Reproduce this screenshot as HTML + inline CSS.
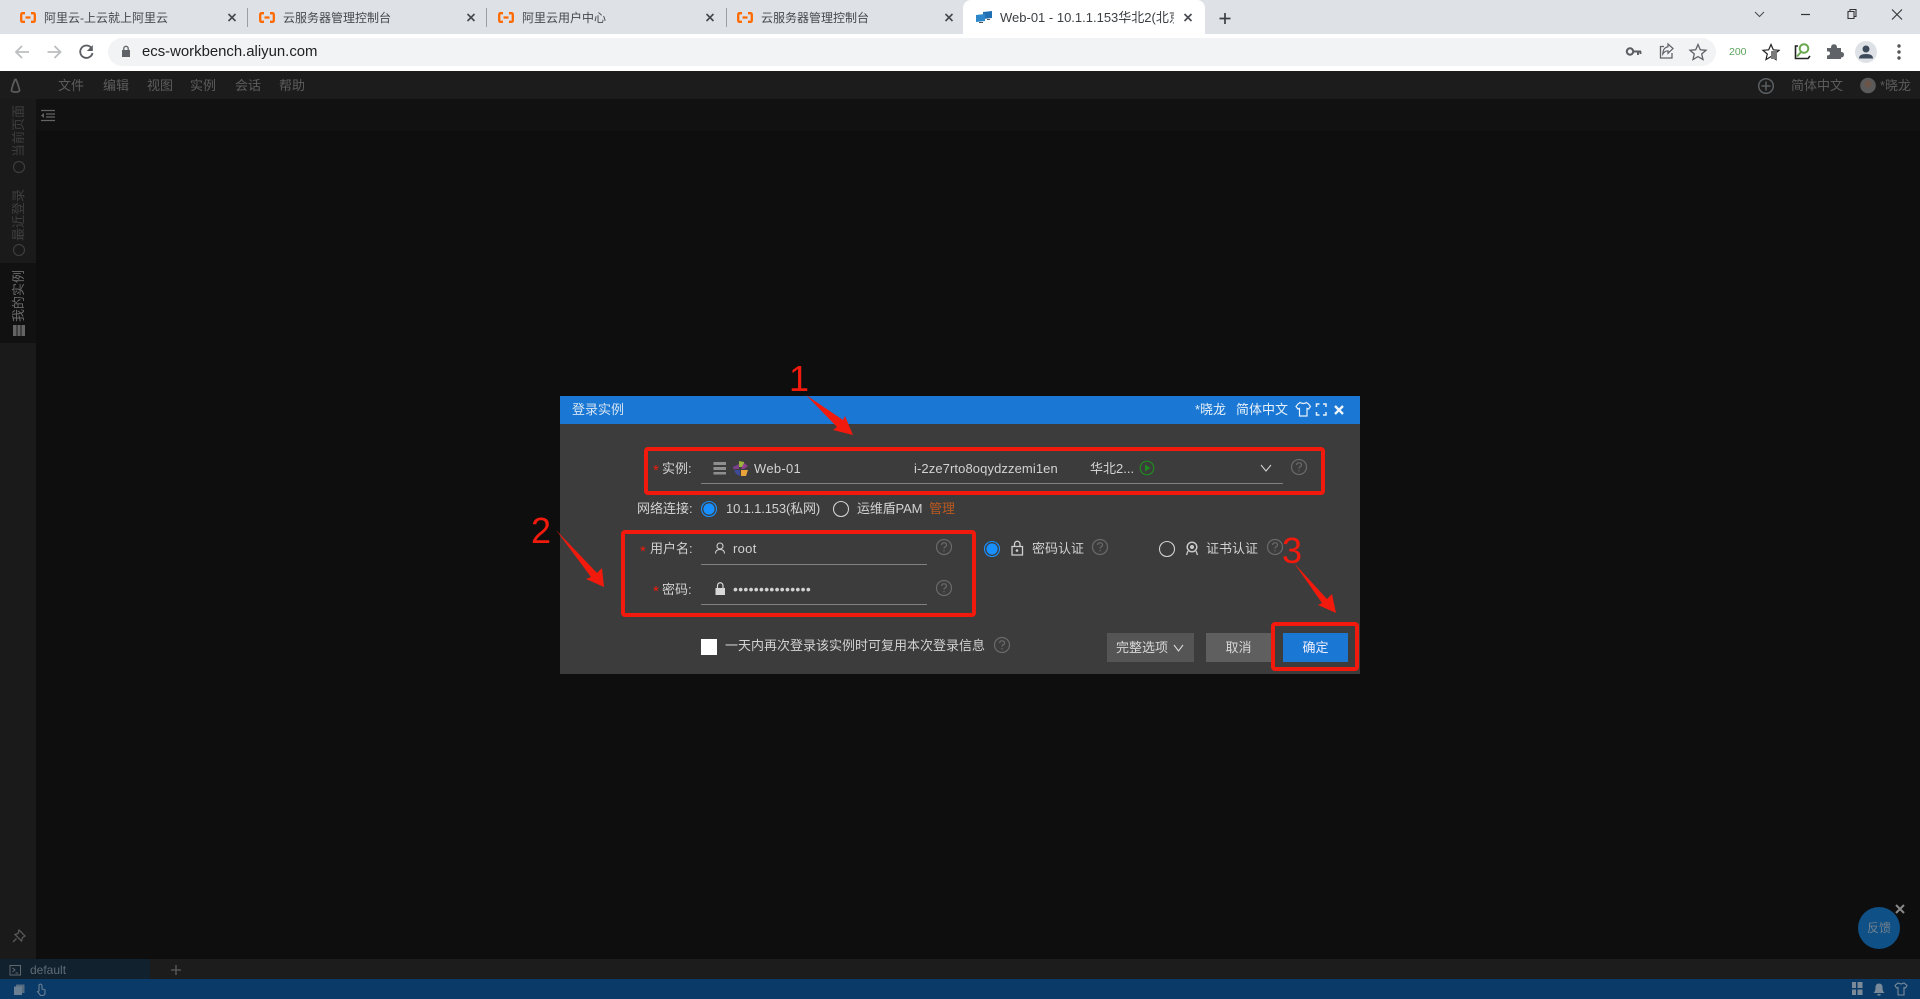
<!DOCTYPE html>
<html lang="zh-CN">
<head>
<meta charset="utf-8">
<title>Web-01</title>
<style>
html,body{margin:0;padding:0;width:1920px;height:999px;overflow:hidden;background:#0e0e0e}
body{position:relative;font-family:"Liberation Sans","Noto Sans CJK SC",sans-serif;font-size:13px}
.b{position:absolute}
.t{position:absolute;white-space:nowrap;line-height:20px;height:20px}
.tab{color:#45494e;font-size:12px}
.menu{color:#5c5c5c;font-size:13px}
.w{color:#d2d2d2;font-size:13px}
.r{color:#f01c10;font-size:15px}
.n{color:#f21a0c;font-size:36px;line-height:36px;height:36px;font-weight:400}
.side{position:absolute;writing-mode:vertical-rl;text-orientation:sideways;transform:rotate(180deg);white-space:nowrap;font-size:13px;line-height:16px;width:16px;left:11px}
.btn{position:absolute;top:633px;height:29px;line-height:29px;text-align:center;color:#d8d8d8;font-size:13px}
svg.o{position:absolute;left:0;top:0;width:1920px;height:999px;pointer-events:none}
.box{position:absolute;box-sizing:border-box;border:4px solid #f21a0c;border-radius:4px}
</style>
</head>
<body>
<!-- browser chrome -->
<div class="b" style="left:0;top:0;width:1920px;height:34px;background:#dee1e6"></div>
<div class="b" style="left:963px;top:0;width:242px;height:34px;background:#fff;border-radius:8px 8px 0 0"></div>
<div class="b" style="left:0;top:34px;width:1920px;height:37px;background:#fff"></div>
<div class="b" style="left:108px;top:38px;width:1608px;height:28px;background:#f1f3f4;border-radius:14px"></div>
<div class="b" style="left:247px;top:8px;width:1px;height:19px;background:#9b9ea3"></div>
<div class="b" style="left:486px;top:8px;width:1px;height:19px;background:#9b9ea3"></div>
<div class="b" style="left:726px;top:8px;width:1px;height:19px;background:#9b9ea3"></div>

<div class="t tab" style="left:44px;top:8px">阿里云-上云就上阿里云</div>
<div class="t tab" style="left:283px;top:8px">云服务器管理控制台</div>
<div class="t tab" style="left:522px;top:8px">阿里云用户中心</div>
<div class="t tab" style="left:761px;top:8px">云服务器管理控制台</div>
<div class="t tab" style="left:1000px;top:8px;width:174px;overflow:hidden;font-size:13px;color:#3c4043">Web-01 - 10.1.1.153华北2(北京</div>
<div class="t" style="left:142px;top:42px;font-size:14.9px;color:#202124">ecs-workbench.aliyun.com</div>
<div class="t" style="left:1729px;top:42px;font-size:10.5px;color:#5da35d">200</div>

<!-- app -->
<div class="b" style="left:0;top:71px;width:1920px;height:28px;background:#1c1c1c"></div>
<div class="b" style="left:0;top:99px;width:36px;height:860px;background:#1a1a1a"></div>
<div class="b" style="left:36px;top:99px;width:1884px;height:32px;background:#111"></div>
<div class="b" style="left:0;top:263px;width:36px;height:80px;background:#111"></div>
<div class="b" style="left:0;top:959px;width:1920px;height:20px;background:#1c1c1c"></div>
<div class="b" style="left:0;top:959px;width:150px;height:20px;background:#12212e"></div>
<div class="b" style="left:0;top:979px;width:1920px;height:20px;background:#0a3a68"></div>

<div class="t menu" style="left:58px;top:76px">文件</div>
<div class="t menu" style="left:103px;top:76px">编辑</div>
<div class="t menu" style="left:147px;top:76px">视图</div>
<div class="t menu" style="left:190px;top:76px">实例</div>
<div class="t menu" style="left:235px;top:76px">会话</div>
<div class="t menu" style="left:279px;top:76px">帮助</div>
<div class="t menu" style="left:1791px;top:76px">简体中文</div>
<div class="t menu" style="left:1880px;top:76px">*晓龙</div>

<div class="side" style="top:105px;color:#3f3f3f">当前页面</div>
<div class="side" style="top:189px;color:#3f3f3f">最近登录</div>
<div class="side" style="top:270px;color:#6b6b6b">我的实例</div>

<div class="t" style="left:30px;top:960px;font-size:12px;color:#5f6c76">default</div>

<!-- dialog -->
<div class="b" style="left:560px;top:396px;width:800px;height:278px;background:#3c3c3c"></div>
<div class="b" style="left:560px;top:396px;width:800px;height:28px;background:#1a78d4"></div>
<div class="t" style="left:572px;top:400px;color:#d5e4f4">登录实例</div>
<div class="t" style="left:1195px;top:400px;color:#e6f0fa">*晓龙</div>
<div class="t" style="left:1236px;top:400px;color:#e6f0fa">简体中文</div>

<div class="t r" style="left:653px;top:461px">*</div>
<div class="t w" style="left:662px;top:459px">实例:</div>
<div class="t w" style="left:754px;top:459px;letter-spacing:.3px">Web-01</div>
<div class="t w" style="left:914px;top:459px;letter-spacing:.1px">i-2ze7rto8oqydzzemi1en</div>
<div class="t w" style="left:1090px;top:459px">华北2...</div>

<div class="t w" style="left:637px;top:499px">网络连接:</div>
<div class="t w" style="left:726px;top:499px;letter-spacing:-.15px">10.1.1.153(私网)</div>
<div class="t w" style="left:857px;top:499px;letter-spacing:-.15px">运维盾PAM</div>
<div class="t" style="left:929px;top:499px;color:#b9591f">管理</div>

<div class="t r" style="left:640px;top:542px">*</div>
<div class="t w" style="left:650px;top:539px">用户名:</div>
<div class="t w" style="left:733px;top:539px;letter-spacing:.3px">root</div>
<div class="t r" style="left:653px;top:582px">*</div>
<div class="t w" style="left:662px;top:580px">密码:</div>
<div class="t w" style="left:733px;top:579px;font-size:14px;letter-spacing:.3px">•••••••••••••••</div>

<div class="t w" style="left:1032px;top:539px">密码认证</div>
<div class="t w" style="left:1206px;top:539px">证书认证</div>
<div class="b" style="left:701px;top:639px;width:16px;height:16px;background:#fff"></div>
<div class="t w" style="left:725px;top:636px">一天内再次登录该实例时可复用本次登录信息</div>
<div class="btn" style="left:1107px;width:87px;background:#555;text-align:left;text-indent:9px">完整选项</div>
<div class="btn" style="left:1206px;width:65px;background:#5f5f5f">取消</div>
<div class="btn" style="left:1283px;width:65px;background:#1a78d4;color:#eef">确定</div>

<!-- annotation boxes -->
<div class="box" style="left:644px;top:447px;width:681px;height:48px"></div>
<div class="box" style="left:621px;top:530px;width:355px;height:87px"></div>
<div class="box" style="left:1271px;top:622px;width:88px;height:49px"></div>
<div class="t n" style="left:789px;top:361px">1</div>
<div class="t n" style="left:531px;top:513px">2</div>
<div class="t n" style="left:1282px;top:533px">3</div>

<svg class="o" viewBox="0 0 1920 999" xmlns="http://www.w3.org/2000/svg">
<defs>
<g id="ali" fill="none" stroke="#ff6a00" stroke-width="2.300">
<path d="M5 1.200H2.800Q1.200 1.200 1.200 2.800V8.200Q1.200 9.800 2.800 9.800H5M11 1.200H13.200Q14.800 1.200 14.800 2.800V8.200Q14.800 9.800 13.200 9.800H11M5.500 5.500H10.500"/>
</g>
<path id="x" d="M-3.500-3.500L3.500 3.500M3.500-3.500L-3.500 3.500" fill="none" stroke="#45484d" stroke-width="1.600"/>
<g id="q" fill="none" stroke="#6a6a6a" stroke-width="1.200">
<circle r="7.500"/><path d="M-2.400-2Q-2.200-4.200 0-4.200Q2.500-4.200 2.500-2Q2.500-.7 1-.1Q0 .4 0 1.600M0 3V4.400"/>
</g>
<g id="radioOn"><circle r="7.500" fill="none" stroke="#1890ff" stroke-width="1.100"/><circle r="5.600" fill="#1890ff"/></g>
<circle id="radioOff" r="7.500" fill="none" stroke="#cfcfcf" stroke-width="1.100"/>
</defs>

<!-- tab icons -->
<use href="#ali" x="20" y="12"/><use href="#ali" x="259" y="12"/><use href="#ali" x="498" y="12"/><use href="#ali" x="737" y="12"/>
<use href="#x" x="232" y="17.500"/><use href="#x" x="471" y="17.500"/><use href="#x" x="710" y="17.500"/><use href="#x" x="949" y="17.500"/><use href="#x" x="1188" y="17.500"/>
<!-- active tab monitors -->
<path d="M983 12L992 11V18L983 19Z" fill="#1f6fb2"/><path d="M976 15L985 14V21L976 22Z" fill="#2c86c9"/><path d="M979 22H983V23H979ZM987 19H990V20H987Z" fill="#555"/>
<path d="M1225 13V24M1219.500 18.500H1230.500" stroke="#3c4043" stroke-width="1.700" fill="none"/>
<!-- window controls -->
<path d="M1755 12L1759.500 16.500L1764 12" fill="none" stroke="#45484d" stroke-width="1"/>
<path d="M1801 14.500H1810" stroke="#333" stroke-width="1.200"/>
<path d="M1848 11.500H1854V18.500H1848ZM1850 11.500V9.500H1856V16.500H1854" fill="none" stroke="#333" stroke-width="1.100"/>
<path d="M1892 9.500L1902 19.500M1902 9.500L1892 19.500" stroke="#333" stroke-width="1.100"/>
<!-- nav -->
<path d="M29 52H16.500M22 46L16 52L22 58" fill="none" stroke="#bcbec1" stroke-width="1.800"/>
<path d="M47.500 52H60M54.500 46L60.500 52L54.500 58" fill="none" stroke="#bcbec1" stroke-width="1.800"/>
<path d="M91 47.500A6.200 6.200 0 1 0 92.500 53" fill="none" stroke="#5a5d61" stroke-width="1.800"/><path d="M92.800 45V51H86.800Z" fill="#5a5d61"/>
<path d="M122 50H130V57H122Z" fill="#5f6368"/><path d="M123.800 50V48.500A2.200 2.200 0 0 1 128.200 48.500V50" fill="none" stroke="#5f6368" stroke-width="1.300"/>
<!-- omnibox icons -->
<circle cx="1630" cy="51.500" r="3.200" fill="none" stroke="#5a5d61" stroke-width="2"/><path d="M1633 51.500H1641M1638 51.500V55M1640.500 51.500V54" stroke="#5a5d61" stroke-width="1.900" fill="none"/>
<path d="M1664 46.500H1660.500V58H1672V53" fill="none" stroke="#5f6368" stroke-width="1.300"/><path d="M1673 48.500L1668 44V46.800Q1663 47.500 1662.800 54Q1664.800 50.800 1668 50.800V53.300Z" fill="none" stroke="#5f6368" stroke-width="1.200"/>
<path d="M1698 44.500L1700.300 49.800L1706 50.300L1701.700 54L1703 59.500L1698 56.600L1693 59.500L1694.300 54L1690 50.300L1695.700 49.800Z" fill="none" stroke="#5f6368" stroke-width="1.300"/>
<!-- extensions -->
<path d="M1771 44.500L1773.300 49.800L1779 50.300L1774.700 54L1776 59.500L1771 56.600L1766 59.500L1767.300 54L1763 50.300L1768.700 49.800Z" fill="none" stroke="#222" stroke-width="1.200"/><path d="M1771 51H1777V59H1771Z" fill="#7a7a7a"/>
<path d="M1798 46H1795.500V58.500H1808L1810 56" fill="none" stroke="#222" stroke-width="1.600"/><circle cx="1804" cy="48.500" r="4.300" fill="none" stroke="#6aa84f" stroke-width="2"/><path d="M1801 52L1797 56.500" stroke="#6aa84f" stroke-width="2"/>
<path d="M1827 49H1831Q1831 45.300 1834 45.300Q1837 45.300 1837 49H1841V53Q1844 53 1844 55.500Q1844 58.500 1841 58.500V60H1827V56.500Q1830 56.500 1830 54.300Q1830 52 1827 52.500Z" fill="#5f6368" transform="translate(0 -1)"/>
<circle cx="1866" cy="52" r="11" fill="#dee1e6"/><circle cx="1866" cy="49" r="3.500" fill="#3c4a5c"/><path d="M1859 58.500Q1859 54 1866 54Q1873 54 1873 58.500Z" fill="#3c4a5c"/>
<circle cx="1899" cy="46" r="1.700" fill="#555"/><circle cx="1899" cy="52" r="1.700" fill="#555"/><circle cx="1899" cy="58" r="1.700" fill="#555"/>

<!-- app icons -->
<path d="M16 79.500Q18.500 85 19.500 90Q20 92 15.500 92Q11 92 11.500 90Q12.500 85 15 79.500Z" fill="none" stroke="#5c5c5c" stroke-width="1.700"/>
<circle cx="1766" cy="86" r="7.300" fill="none" stroke="#5a5f63" stroke-width="1.500"/><path d="M1766 81.500V90.500M1761.500 86H1770.500" stroke="#5a5f63" stroke-width="1.500"/>
<circle cx="1868" cy="85.500" r="7.800" fill="#5a5a5a"/><circle cx="1868" cy="84" r="3.600" fill="#6b5548"/>
<path d="M41 110.500H55M46 114H55M46 117H55M41 120.500H55" stroke="#636363" stroke-width="1.200" fill="none"/><path d="M44 113L41 115.500L44 118Z" fill="#636363"/>
<circle cx="19" cy="167" r="5.500" fill="none" stroke="#3c3c3c" stroke-width="1.200"/>
<circle cx="19" cy="250" r="5.500" fill="none" stroke="#3c3c3c" stroke-width="1.200"/>
<path d="M13 325H25V336H13Z" fill="#646464"/><path d="M17 325V336M21 325V336" stroke="#1b1b1b" stroke-width="1"/>
<path d="M19 930L25 936L22.500 937.500L21.500 941L15 934.500L18 933.500ZM16.500 938.500L13 942" fill="none" stroke="#585858" stroke-width="1.300"/>
<path d="M10 965.500H20.500V975H10Z" fill="none" stroke="#60686e" stroke-width="1"/><path d="M12.500 968L15 970L12.500 972M15.500 973H18" fill="none" stroke="#60686e" stroke-width="1"/>
<path d="M176 965V975M171 970H181" stroke="#5c5c5c" stroke-width="1.300"/>
<path d="M14 986.500H22V995H14Z" fill="#6b7f92"/><path d="M16 984.500H24.500V993H22V986.500H16Z" fill="#566b80"/>
<path d="M39 985Q41 983 42 985.500V989L45 990V993Q45 995.500 42 995.500H40.500L37.500 991.500L39 991Z" fill="none" stroke="#6b7f92" stroke-width="1.100"/>
<circle cx="1879" cy="928" r="21" fill="#0f5086"/>
<path d="M1896 905L1904 913M1904 905L1896 913" stroke="#888" stroke-width="2"/>
<path d="M1852 982H1856V988H1852ZM1857.500 982H1862.500V988H1857.500ZM1852 989.500H1856V995H1852ZM1857.500 989.500H1862.500V995H1857.500Z" fill="#7b8a99"/>
<path d="M1873.500 993Q1875.500 991.500 1875.500 987.500Q1875.500 983.500 1879 983.500Q1882.500 983.500 1882.500 987.500Q1882.500 991.500 1884.500 993ZM1877.500 994H1880.500V995.500H1877.500Z" fill="#7b8a99"/>
<path d="M1898 983L1901 984L1904 983L1907 985.500L1905.500 988L1904 987.500V995H1898V987.500L1896.500 988L1895 985.500Z" fill="none" stroke="#7b8a99" stroke-width="1.100"/>

<!-- dialog header icons -->
<path d="M1300 402.500L1298 404L1296 406.500L1298 409L1299.500 408.500V416H1307V408.500L1308.500 409L1310.500 406.500L1308.500 404L1306.500 402.500Q1303.300 404.500 1300 402.500Z" fill="none" stroke="#e6f0fa" stroke-width="1.200"/>
<path d="M1316.500 407V404H1319.500M1323 404H1326V407M1326 412V415H1323M1319.500 415H1316.500V412" fill="none" stroke="#e6f0fa" stroke-width="1.500"/>
<path d="M1335 406L1343 414M1343 406L1335 414" stroke="#f0f5fb" stroke-width="2.300"/>

<!-- underlines -->
<path d="M701 483.500H1283M701 564.500H927M701 604.500H927" stroke="#818181" stroke-width="1"/>
<!-- instance icons -->
<path d="M713.500 462H726V465H713.500ZM713.500 467H726V470H713.500ZM713.500 472H726V474.500H713.500Z" fill="#8f8f8f"/>
<path d="M739 461L744 462V467H739Z" fill="#9ab33c"/><path d="M744 463L748 466L744 469H741Z" fill="#8c3f8f"/><path d="M733 467L739 464V469H733Z" fill="#7a3f8a"/><path d="M734 470H740V476L736 474Z" fill="#3e4a94"/><path d="M741 470H748L746 476H741Z" fill="#e8a33a"/>
<use href="#q" x="1299" y="467"/>
<circle cx="1147" cy="468" r="6.800" fill="none" stroke="#1f8a1f" stroke-width="1.200"/><path d="M1145 464.500L1150.500 468L1145 471.500Z" fill="#1f8a1f"/>
<path d="M1261 465L1266 471L1271 465" fill="none" stroke="#d0d0d0" stroke-width="1.100"/>
<!-- radios -->
<use href="#radioOn" x="709" y="509"/><use href="#radioOff" x="841" y="509"/><use href="#radioOn" x="992" y="549"/><use href="#radioOff" x="1167" y="549"/>
<!-- fields -->
<circle cx="720" cy="546" r="3" fill="none" stroke="#d0d0d0" stroke-width="1.100"/><path d="M715.500 553.500Q715.500 549.500 720 549.500Q724.500 549.500 724.500 553.500" fill="none" stroke="#d0d0d0" stroke-width="1.100"/>
<use href="#q" x="944" y="547"/><use href="#q" x="944" y="588"/>
<path d="M715.500 588H725V595H715.500Z" fill="#d8d8d8"/><path d="M717.500 588V585.500A2.700 2.700 0 0 1 723 585.500V588" fill="none" stroke="#d8d8d8" stroke-width="1.200"/>
<path d="M1012 546.500H1022.500V555H1012Z" fill="none" stroke="#d0d0d0" stroke-width="1.300"/><path d="M1014.500 546.500V544A2.700 2.700 0 0 1 1020 544V546.500" fill="none" stroke="#d0d0d0" stroke-width="1.300"/><circle cx="1017" cy="550.500" r="1.300" fill="#d0d0d0"/>
<use href="#q" x="1100" y="547"/>
<circle cx="1192" cy="547" r="4.800" fill="none" stroke="#c8c8c8" stroke-width="1.500"/><circle cx="1192" cy="547" r="2" fill="#c8c8c8"/><path d="M1188 551L1186.500 555M1196 551L1197.500 555" stroke="#c8c8c8" stroke-width="1.300"/>
<use href="#q" x="1275" y="547"/>
<use href="#q" x="1002" y="645"/>
<path d="M1174 645L1178.500 651L1183 645" fill="none" stroke="#d8d8d8" stroke-width="1.100"/>

<!-- arrows -->
<path fill="#f21a0c" d="M806 395L843 420L845 416L853 435L833 430L837 427Z"/>
<path fill="#f21a0c" d="M556 530L597 573L602 568L604 587L586 579L591 577Z"/>
<path fill="#f21a0c" d="M1294 563L1327 599L1332 594L1336 613L1318 605L1322 603Z"/>
</svg>
<div class="t" style="left:1866px;top:918px;font-size:12px;color:#74808c;width:26px;text-align:center">反馈</div>
</body>
</html>
